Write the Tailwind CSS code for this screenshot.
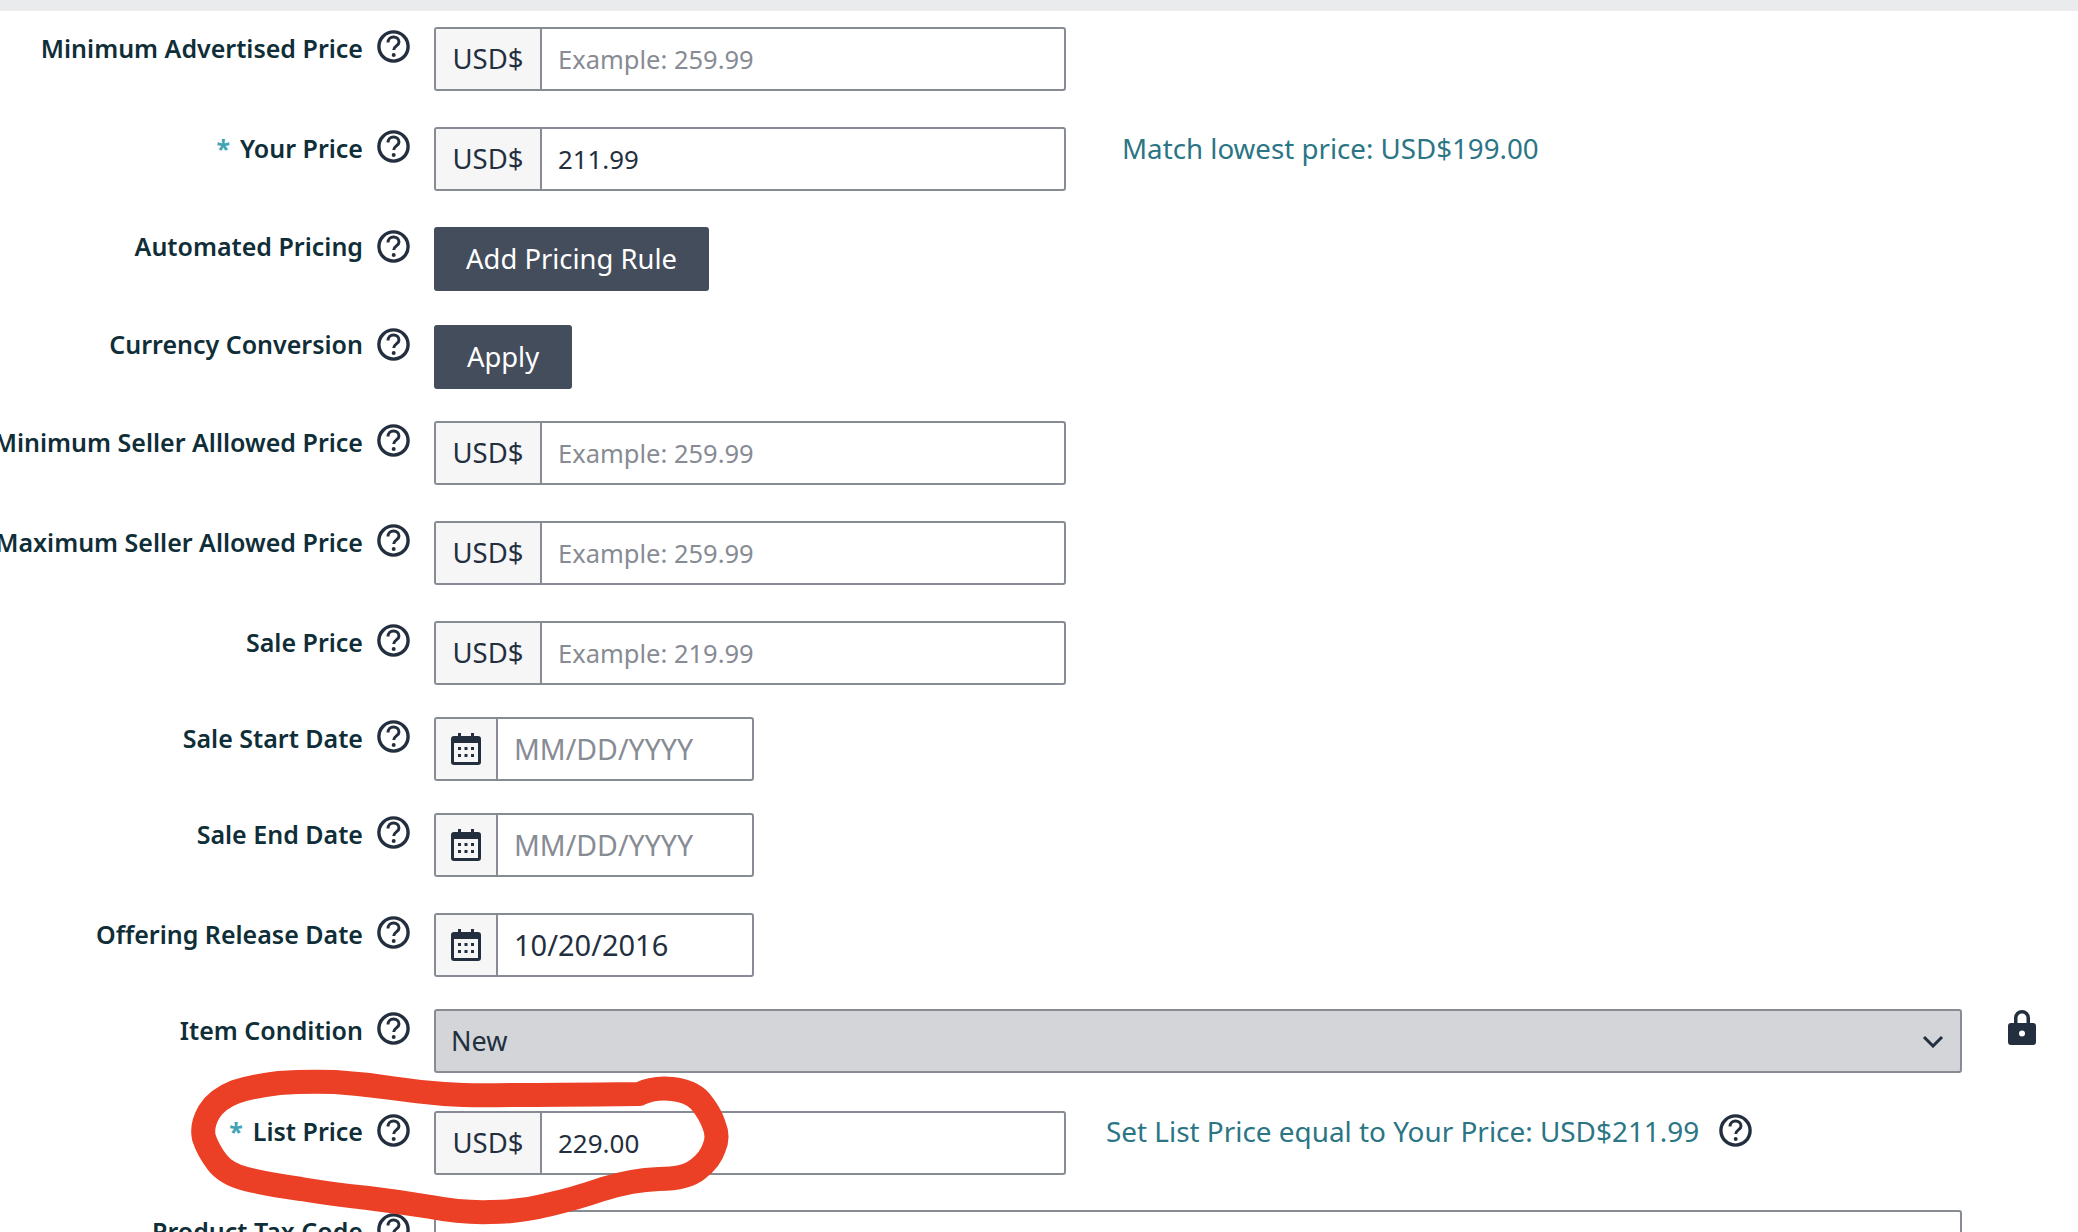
<!DOCTYPE html>
<html lang="en">
<head>
    <meta charset="UTF-8">
    <title>Offer Pricing</title>
    <script src="https://cdn.jsdelivr.net/npm/@tailwindcss/browser@4"></script>
</head>
<body class="bg-white overflow-hidden font-['Noto_Sans',sans-serif] text-[25px] text-[#232f3e]">
    <div class="relative h-[1232px] overflow-hidden">
        <div class="h-[11px] bg-[#eaebec]"></div>
        <svg class="hidden">
            <symbol id="help" viewBox="0 0 33 33"><circle cx="16.5" cy="16.500" r="14.6" fill="none" stroke="currentColor" stroke-width="3.4"/><path d="M11 12.500c0-3.200 2.400-5.500 5.500-5.500s5.500 2.100 5.500 5c0 3.800-5.300 4-5.300 8" fill="none" stroke="currentColor" stroke-width="3"/><circle cx="16.700" cy="25" r="2" fill="currentColor"/></symbol>
            <symbol id="cal" viewBox="0 0 30 32"><path d="M7 0h3v3h10V0h3v3h4a3 3 0 0 1 3 3v23a3 3 0 0 1-3 3H3a3 3 0 0 1-3-3V6a3 3 0 0 1 3-3h4zM3 11v17a1 1 0 0 0 1 1h22a1 1 0 0 0 1-1V11z" fill="currentColor" fill-rule="evenodd"/><path d="M3 10h24v19H3z" fill="#f6f6f7"/><path d="M7 14h3v3H7zM13.500 14h3v3h-3zM20 14h3v3h-3zM7 21h3v3H7zM13.500 21h3v3h-3zM20 21h3v3h-3z" fill="currentColor"/></symbol>
        </svg>

        <main class="flex flex-col pt-[16px]">
            <!-- Minimum Advertised Price -->
            <div class="flex items-start h-[64px]">
                <div class="w-[363px] flex justify-end whitespace-nowrap font-semibold text-[#0f2e38] pt-[2px] leading-[38px]">Minimum Advertised Price</div>
                <svg class="w-[33px] h-[33px] ml-[14px] mt-[3px] shrink-0"><use href="#help"/></svg>
                <div class="ml-[24px] w-[632px] h-[64px] flex border-2 border-[#878b94] rounded-[3px] overflow-hidden">
                    <div class="w-[106px] bg-[#f6f6f7] border-r-2 border-[#878b94] flex items-center justify-center text-[27.500px]">USD$</div>
                    <div class="flex items-center pl-[16px] text-[25.500px] text-[#878b94]">Example: 259.99</div>
                </div>
            </div>
            <!-- Your Price -->
            <div class="flex items-start h-[64px] mt-[36px]">
                <div class="w-[363px] flex justify-end whitespace-nowrap font-semibold text-[#0f2e38] pt-[2px] leading-[38px]"><span class="font-bold text-[#3fa4b4] mr-[10px]">*</span>Your Price</div>
                <svg class="w-[33px] h-[33px] ml-[14px] mt-[3px] shrink-0"><use href="#help"/></svg>
                <div class="ml-[24px] w-[632px] h-[64px] flex border-2 border-[#878b94] rounded-[3px] overflow-hidden">
                    <div class="w-[106px] bg-[#f6f6f7] border-r-2 border-[#878b94] flex items-center justify-center text-[27.500px]">USD$</div>
                    <div class="flex items-center pl-[16px] text-[25.800px]">211.99</div>
                </div>
                <a class="ml-[56px] mt-[2px] leading-[38px] text-[27.700px] text-[#2b7585] whitespace-nowrap">Match lowest price: USD$199.00</a>
            </div>
            <!-- Automated Pricing -->
            <div class="flex items-start h-[64px] mt-[36px]">
                <div class="w-[363px] flex justify-end whitespace-nowrap font-semibold text-[#0f2e38] leading-[38px]">Automated Pricing</div>
                <svg class="w-[33px] h-[33px] ml-[14px] mt-[3px] shrink-0"><use href="#help"/></svg>
                <div class="ml-[24px] w-[275px] h-[64px] rounded-[3px] bg-[#434d5c] text-white text-[27.400px] flex items-center justify-center">Add Pricing Rule</div>
            </div>
            <!-- Currency Conversion -->
            <div class="flex items-start h-[64px] mt-[34px]">
                <div class="w-[363px] flex justify-end whitespace-nowrap font-semibold text-[#0f2e38] leading-[38px]">Currency Conversion</div>
                <svg class="w-[33px] h-[33px] ml-[14px] mt-[3px] shrink-0"><use href="#help"/></svg>
                <div class="ml-[24px] w-[138px] h-[64px] rounded-[3px] bg-[#434d5c] text-white text-[27.400px] flex items-center justify-center">Apply</div>
            </div>
            <!-- Minimum Seller Allowed Price -->
            <div class="flex items-start h-[64px] mt-[32px]">
                <div class="w-[363px] flex justify-end whitespace-nowrap font-semibold text-[#0f2e38] pt-[2px] leading-[38px]">Minimum Seller Alllowed Price</div>
                <svg class="w-[33px] h-[33px] ml-[14px] mt-[3px] shrink-0"><use href="#help"/></svg>
                <div class="ml-[24px] w-[632px] h-[64px] flex border-2 border-[#878b94] rounded-[3px] overflow-hidden">
                    <div class="w-[106px] bg-[#f6f6f7] border-r-2 border-[#878b94] flex items-center justify-center text-[27.500px]">USD$</div>
                    <div class="flex items-center pl-[16px] text-[25.500px] text-[#878b94]">Example: 259.99</div>
                </div>
            </div>
            <!-- Maximum Seller Allowed Price -->
            <div class="flex items-start h-[64px] mt-[36px]">
                <div class="w-[363px] flex justify-end whitespace-nowrap font-semibold text-[#0f2e38] pt-[2px] leading-[38px]">Maximum Seller Allowed Price</div>
                <svg class="w-[33px] h-[33px] ml-[14px] mt-[3px] shrink-0"><use href="#help"/></svg>
                <div class="ml-[24px] w-[632px] h-[64px] flex border-2 border-[#878b94] rounded-[3px] overflow-hidden">
                    <div class="w-[106px] bg-[#f6f6f7] border-r-2 border-[#878b94] flex items-center justify-center text-[27.500px]">USD$</div>
                    <div class="flex items-center pl-[16px] text-[25.500px] text-[#878b94]">Example: 259.99</div>
                </div>
            </div>
            <!-- Sale Price -->
            <div class="flex items-start h-[64px] mt-[36px]">
                <div class="w-[363px] flex justify-end whitespace-nowrap font-semibold text-[#0f2e38] pt-[2px] leading-[38px]">Sale Price</div>
                <svg class="w-[33px] h-[33px] ml-[14px] mt-[3px] shrink-0"><use href="#help"/></svg>
                <div class="ml-[24px] w-[632px] h-[64px] flex border-2 border-[#878b94] rounded-[3px] overflow-hidden">
                    <div class="w-[106px] bg-[#f6f6f7] border-r-2 border-[#878b94] flex items-center justify-center text-[27.500px]">USD$</div>
                    <div class="flex items-center pl-[16px] text-[25.500px] text-[#878b94]">Example: 219.99</div>
                </div>
            </div>
            <!-- Sale Start Date -->
            <div class="flex items-start h-[64px] mt-[32px]">
                <div class="w-[363px] flex justify-end whitespace-nowrap font-semibold text-[#0f2e38] pt-[2px] leading-[38px]">Sale Start Date</div>
                <svg class="w-[33px] h-[33px] ml-[14px] mt-[3px] shrink-0"><use href="#help"/></svg>
                <div class="ml-[24px] w-[320px] h-[64px] flex border-2 border-[#878b94] rounded-[3px] overflow-hidden">
                    <div class="w-[62px] bg-[#f6f6f7] border-r-2 border-[#878b94] flex items-center justify-center"><svg class="w-[30px] h-[32px]"><use href="#cal"/></svg></div>
                    <div class="flex items-center pl-[16px] text-[28.500px] text-[#878b94]">MM/DD/YYYY</div>
                </div>
            </div>
            <!-- Sale End Date -->
            <div class="flex items-start h-[64px] mt-[32px]">
                <div class="w-[363px] flex justify-end whitespace-nowrap font-semibold text-[#0f2e38] pt-[2px] leading-[38px]">Sale End Date</div>
                <svg class="w-[33px] h-[33px] ml-[14px] mt-[3px] shrink-0"><use href="#help"/></svg>
                <div class="ml-[24px] w-[320px] h-[64px] flex border-2 border-[#878b94] rounded-[3px] overflow-hidden">
                    <div class="w-[62px] bg-[#f6f6f7] border-r-2 border-[#878b94] flex items-center justify-center"><svg class="w-[30px] h-[32px]"><use href="#cal"/></svg></div>
                    <div class="flex items-center pl-[16px] text-[28.500px] text-[#878b94]">MM/DD/YYYY</div>
                </div>
            </div>
            <!-- Offering Release Date -->
            <div class="flex items-start h-[64px] mt-[36px]">
                <div class="w-[363px] flex justify-end whitespace-nowrap font-semibold text-[#0f2e38] pt-[2px] leading-[38px]">Offering Release Date</div>
                <svg class="w-[33px] h-[33px] ml-[14px] mt-[3px] shrink-0"><use href="#help"/></svg>
                <div class="ml-[24px] w-[320px] h-[64px] flex border-2 border-[#878b94] rounded-[3px] overflow-hidden">
                    <div class="w-[62px] bg-[#f6f6f7] border-r-2 border-[#878b94] flex items-center justify-center"><svg class="w-[30px] h-[32px]"><use href="#cal"/></svg></div>
                    <div class="flex items-center pl-[16px] text-[29px]">10/20/2016</div>
                </div>
            </div>
            <!-- Item Condition -->
            <div class="flex items-start h-[64px] mt-[32px]">
                <div class="w-[363px] flex justify-end whitespace-nowrap font-semibold text-[#0f2e38] pt-[2px] leading-[38px]">Item Condition</div>
                <svg class="w-[33px] h-[33px] ml-[14px] mt-[3px] shrink-0"><use href="#help"/></svg>
                <div class="ml-[24px] w-[1528px] h-[64px] flex items-center justify-between border-2 border-[#878b94] rounded-[3px] bg-[#d3d5d9] pl-[15px] pr-[16px]">
                    <span class="text-[27px]">New</span>
                    <svg class="w-[22px] h-[13px]" viewBox="0 0 22 13"><path d="M2 2l9 9 9-9" fill="none" stroke="currentColor" stroke-width="3"/></svg>
                </div>
                <svg class="w-[28px] h-[36px] ml-[46px] shrink-0" viewBox="0 0 28 36"><path fill-rule="evenodd" fill="currentColor" d="M6 14V9a8 8 0 0 1 16 0v5h3a3 3 0 0 1 3 3v16a3 3 0 0 1-3 3H3a3 3 0 0 1-3-3V17a3 3 0 0 1 3-3zM9.500 14h9V9a4.500 4.500 0 0 0-9 0zM14 21.500a3 3 0 1 0 0 6 3 3 0 0 0 0-6z"/></svg>
            </div>
            <!-- List Price -->
            <div class="flex items-start h-[64px] mt-[38px]">
                <div class="w-[363px] flex justify-end whitespace-nowrap font-semibold text-[#0f2e38] pt-[1px] leading-[38px]"><span class="font-bold text-[#3fa4b4] mr-[10px]">*</span>List Price</div>
                <svg class="w-[33px] h-[33px] ml-[14px] mt-[3px] shrink-0"><use href="#help"/></svg>
                <div class="ml-[24px] w-[632px] h-[64px] flex border-2 border-[#878b94] rounded-[3px] overflow-hidden">
                    <div class="w-[106px] bg-[#f6f6f7] border-r-2 border-[#878b94] flex items-center justify-center text-[27.500px]">USD$</div>
                    <div class="flex items-center pl-[16px] text-[26px]">229.00</div>
                </div>
                <a class="ml-[40px] mt-[1px] leading-[38px] text-[27.900px] text-[#2b7585] whitespace-nowrap">Set List Price equal to Your Price: USD$211.99</a>
                <svg class="w-[33px] h-[33px] ml-[20px] mt-[3px] shrink-0"><use href="#help"/></svg>
            </div>
            <!-- Product Tax Code -->
            <div class="flex items-start h-[64px] mt-[35px]">
                <div class="w-[363px] flex justify-end whitespace-nowrap font-semibold text-[#0f2e38] pt-[2px] leading-[38px]">Product Tax Code</div>
                <svg class="w-[33px] h-[33px] ml-[14px] mt-[3px] shrink-0"><use href="#help"/></svg>
                <div class="ml-[24px] w-[1528px] h-[64px] border-2 border-[#878b94] rounded-[3px]"></div>
            </div>
        </main>

        <!-- red marker scribble drawn over the form -->
        <svg class="absolute inset-0 w-[2078px] h-[1232px] pointer-events-none" viewBox="0 0 2078 1232">
            <path fill="none" stroke="#eb4025" stroke-width="24" stroke-linecap="round" stroke-linejoin="round" d="M639 1094 Q552 1095 511 1095 Q471 1096 444 1094 Q418 1092 391 1088 Q364 1084 335 1082 Q306 1081 279 1083 Q253 1086 235 1092 Q217 1099 209 1112 Q201 1126 204 1138 Q208 1150 217 1162 Q226 1174 246 1179 Q266 1184 301 1189 Q337 1195 368 1198 Q400 1202 431 1207 Q462 1213 491 1212 Q520 1212 547 1205 Q574 1199 603 1189 Q632 1180 659 1179 Q686 1179 698 1169 Q710 1160 714 1148 Q719 1137 714 1125 Q710 1113 700 1101 Q691 1091 672 1089 Q654 1087 639 1094"/>
        </svg>
    </div>
</body>
</html>
